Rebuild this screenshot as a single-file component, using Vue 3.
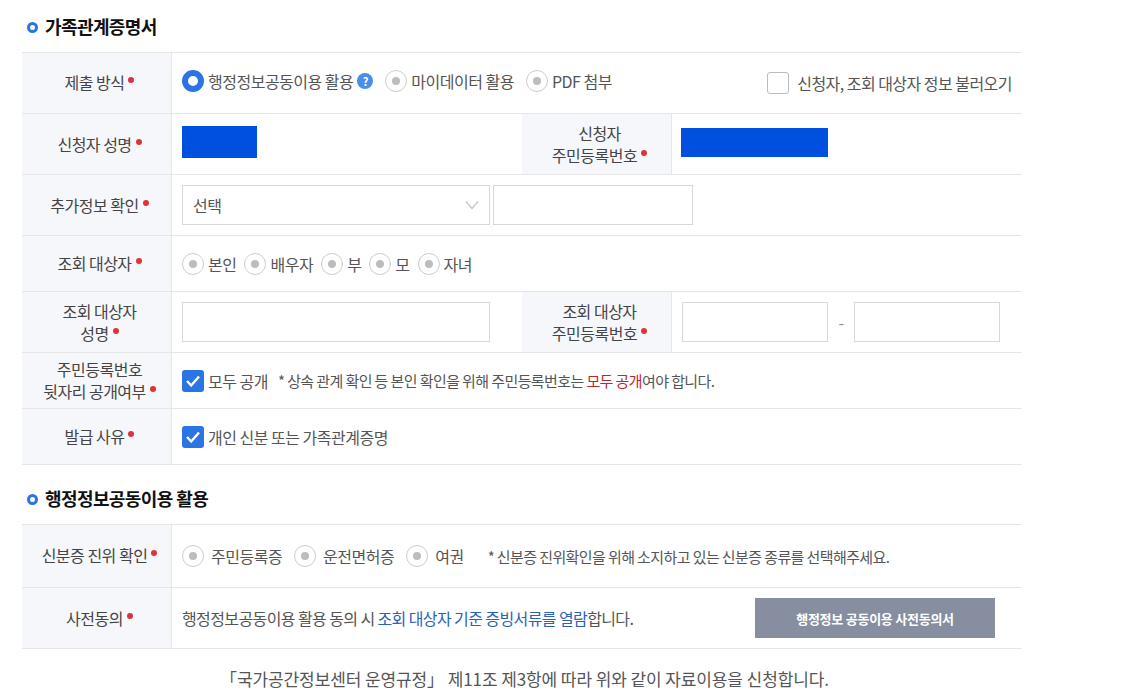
<script setup>
const targets = ['본인', '배우자', '부', '모', '자녀']
const idTypes = ['주민등록증', '운전면허증', '여권']
</script>

<template>
  <div class="page">
    <h2 class="section-title first"><i class="bullet"></i>가족관계증명서</h2>
    <div class="form-table">
      <div class="row lifted">
        <div class="th"><span>제출 방식<b class="req"></b></span></div>
        <div class="td between">
          <div class="options">
            <label class="radio-item raised">
              <i class="radio on"></i>행정정보공동이용 활용
              <i class="help">?</i>
            </label>
            <label class="radio-item raised"><i class="radio"></i>마이데이터 활용</label>
            <label class="radio-item raised"><i class="radio"></i>PDF 첨부</label>
          </div>
          <label class="check-item load">
            <i class="check empty"></i>신청자, 조회 대상자 정보 불러오기
          </label>
        </div>
      </div>

      <div class="row">
        <div class="th"><span>신청자 성명<b class="req"></b></span></div>
        <div class="td half"><div class="masked name"></div></div>
        <div class="th"><span>신청자<br />주민등록번호<b class="req"></b></span></div>
        <div class="td"><div class="masked rrn"></div></div>
      </div>

      <div class="row">
        <div class="th"><span>추가정보 확인<b class="req"></b></span></div>
        <div class="td tight">
          <div class="select">
            선택
            <svg width="14" height="10" viewBox="0 0 14 10" fill="none" stroke="#c4c4c4" stroke-width="1.3">
              <path d="M1 1.5 7 8.5 13 1.5" />
            </svg>
          </div>
          <input class="input extra" type="text" />
        </div>
      </div>

      <div class="row short lifted">
        <div class="th"><span>조회 대상자<b class="req"></b></span></div>
        <div class="td">
          <div class="options narrow">
            <label v-for="t in targets" :key="t" class="radio-item"><i class="radio"></i>{{ t }}</label>
          </div>
        </div>
      </div>

      <div class="row">
        <div class="th"><span>조회 대상자<br />성명<b class="req"></b></span></div>
        <div class="td half"><input class="input wide" type="text" /></div>
        <div class="th"><span>조회 대상자<br />주민등록번호<b class="req"></b></span></div>
        <div class="td rrn-inputs">
          <input class="input part" type="text" />
          <span class="dash">-</span>
          <input class="input part" type="text" />
        </div>
      </div>

      <div class="row short lifted">
        <div class="th"><span>주민등록번호<br />뒷자리 공개여부<b class="req"></b></span></div>
        <div class="td">
          <label class="check-item"><i class="check"><svg width="16" height="14" viewBox="0 0 16 14" fill="none" stroke="#fff" stroke-width="2.4"><path d="M2 7 6.2 11.5 14 2.5" /></svg></i>모두 공개</label>
          <p class="note">* 상속 관계 확인 등 본인 확인을 위해 주민등록번호는 <em class="red">모두 공개</em>여야 합니다.</p>
        </div>
      </div>

      <div class="row short lifted">
        <div class="th"><span>발급 사유<b class="req"></b></span></div>
        <div class="td">
          <label class="check-item"><i class="check"><svg width="16" height="14" viewBox="0 0 16 14" fill="none" stroke="#fff" stroke-width="2.4"><path d="M2 7 6.2 11.5 14 2.5" /></svg></i>개인 신분 또는 가족관계증명</label>
        </div>
      </div>
    </div>

    <h2 class="section-title second"><i class="bullet"></i>행정정보공동이용 활용</h2>
    <div class="form-table">
      <div class="row tall lifted">
        <div class="th"><span>신분증 진위 확인<b class="req"></b></span></div>
        <div class="td">
          <div class="options">
            <label v-for="t in idTypes" :key="t" class="radio-item roomy"><i class="radio"></i>{{ t }}</label>
          </div>
          <p class="note id-note">* 신분증 진위확인을 위해 소지하고 있는 신분증 종류를 선택해주세요.</p>
        </div>
      </div>
      <div class="row">
        <div class="th"><span>사전동의<b class="req"></b></span></div>
        <div class="td between agree">
          <p class="agree-text">행정정보공동이용 활용 동의 시 <em class="blue">조회 대상자 기준 증빙서류를 열람</em>합니다.</p>
          <button class="agree-btn" type="button">행정정보 공동이용 사전동의서</button>
        </div>
      </div>
    </div>

    <p class="closing">「국가공간정보센터 운영규정」 제11조 제3항에 따라 위와 같이 자료이용을 신청합니다.</p>
  </div>
</template>

<style scoped>
.page {
  width: 1000px;
  margin-left: 22px;
  font-family: "Noto Sans CJK KR", "Noto Sans", sans-serif;
  font-size: 16px;
  letter-spacing: -0.5px;
  color: #555;
}

.section-title {
  display: flex;
  align-items: flex-start;
  box-sizing: border-box;
  margin: 0;
  font-size: 18px;
  font-weight: 700;
  letter-spacing: -0.6px;
  line-height: 24px;
  color: #111;
}

.section-title.first {
  height: 52px;
  padding-top: 14px;
}

.section-title.second {
  height: 59px;
  padding-top: 21px;
}

.bullet {
  width: 11px;
  height: 11px;
  margin: 8px 7px 0 5px;
  box-sizing: border-box;
  border: 3px solid #2b74e4;
  border-radius: 50%;
}

.form-table {
  border-top: 1px solid #e6e6e6;
}

.row {
  display: flex;
  height: 61px;
  box-sizing: border-box;
  border-bottom: 1px solid #e6e6e6;
}

.row.short {
  height: 56px;
}

.row.tall {
  height: 63px;
}

.th {
  display: flex;
  flex: 0 0 150px;
  align-items: center;
  justify-content: center;
  box-sizing: border-box;
  padding-left: 6px;
  border-right: 1px solid #e6e6e6;
  background: #f6f7fb;
  color: #444;
  line-height: 22px;
  text-align: center;
}

.row.lifted .th span {
  margin-top: -2px;
}

.td {
  display: flex;
  flex: 1;
  align-items: center;
  padding-left: 10px;
}

.td.half {
  flex: 0 0 350px;
  box-sizing: border-box;
}

.td.between {
  justify-content: space-between;
  padding-right: 10px;
}

.td.tight {
  gap: 3px;
}

.req {
  display: inline-block;
  width: 6px;
  height: 6px;
  margin-left: 4px;
  border-radius: 50%;
  background: #e0323a;
  vertical-align: 6px;
}

.options {
  display: flex;
  align-items: center;
  gap: 12px;
}

.options.narrow {
  gap: 8px;
}

.radio-item {
  display: flex;
  align-items: center;
  gap: 4px;
  white-space: nowrap;
}

.radio-item.raised {
  margin-top: -4px;
}

.radio-item.roomy {
  gap: 7px;
}

.radio {
  position: relative;
  width: 22px;
  height: 22px;
  box-sizing: border-box;
  border: 1px solid #ccc;
  border-radius: 50%;
  background: #fff;
}

.radio::after {
  content: "";
  position: absolute;
  top: 6px;
  left: 6px;
  width: 8px;
  height: 8px;
  border-radius: 50%;
  background: #bdbdbd;
}

.radio.on {
  border: 6px solid #2b74e4;
}

.radio.on::after {
  display: none;
}

.help {
  display: flex;
  align-items: center;
  justify-content: center;
  width: 16px;
  height: 16px;
  border-radius: 50%;
  background: #4a8ee8;
  color: #fff;
  font-size: 11px;
  font-style: normal;
  font-weight: 700;
}

.check-item {
  display: flex;
  align-items: center;
  gap: 4px;
  white-space: nowrap;
}

.check-item.load {
  gap: 8px;
  letter-spacing: -0.53px;
}

.check {
  display: flex;
  align-items: center;
  justify-content: center;
  width: 22px;
  height: 22px;
  box-sizing: border-box;
  border-radius: 3px;
  background: #2b74e4;
}

.check.empty {
  border: 1px solid #bbb;
  background: #fff;
}

.masked {
  background: #0050e0;
}

.masked.name {
  width: 75px;
  height: 32px;
  margin-top: -4px;
}

.masked.rrn {
  width: 147px;
  height: 29px;
  margin: -3px 0 0 -1px;
}

.select {
  display: flex;
  align-items: center;
  justify-content: space-between;
  width: 308px;
  height: 40px;
  padding: 0 10px;
  box-sizing: border-box;
  border: 1px solid #d8d8d8;
}

.input {
  height: 40px;
  box-sizing: border-box;
  border: 1px solid #d8d8d8;
  border-radius: 0;
  outline: none;
  background: #fff;
}

.input.extra {
  width: 200px;
}

.input.wide {
  width: 308px;
}

.input.part {
  width: 146px;
}

.dash {
  width: 26px;
  color: #888;
  text-align: center;
}

.note {
  margin: 0 0 0 10px;
  font-size: 15px;
  letter-spacing: -0.6px;
  white-space: nowrap;
}

.note.id-note {
  margin-left: 24px;
}

.red,
.blue {
  font-style: normal;
}

.red {
  color: #c0272d;
}

.blue {
  color: #2a62b8;
}

.agree-text {
  margin: 0;
  letter-spacing: -0.6px;
}

.td.agree {
  padding-right: 27px;
}

.agree-btn {
  width: 240px;
  height: 40px;
  border: 0;
  background: #868e9f;
  color: #fff;
  font-family: inherit;
  font-size: 13px;
  font-weight: 700;
  letter-spacing: -0.25px;
}

.closing {
  margin: 18px 0 0;
  padding-left: 5px;
  font-size: 17px;
  letter-spacing: -0.1px;
  line-height: 24px;
  text-align: center;
  white-space: nowrap;
}
</style>
